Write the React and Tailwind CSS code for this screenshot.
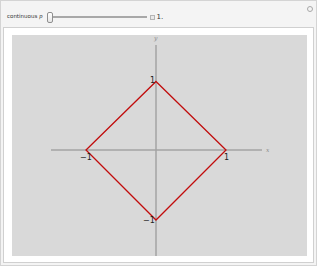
import React from 'react';

const Plot = () => (
  <svg width="295" height="221" viewBox="0 0 295 221" className="block">
    <line x1="39" y1="115" x2="250" y2="115" stroke="#a3a3a3" strokeWidth="1.5" />
    <line x1="144" y1="10" x2="144" y2="221" stroke="#a3a3a3" strokeWidth="1.5" />
    <polygon points="144,46.5 214,115 144,185 74,115" fill="none" stroke="#c10c0c" strokeWidth="1.3" />
    <text x="254" y="117" fontSize="6" fontStyle="italic" fill="#8a8a8a" fontFamily="DejaVu Serif, serif">x</text>
    <text x="142" y="5" fontSize="6" fontStyle="italic" fill="#8a8a8a" fontFamily="DejaVu Serif, serif">y</text>
    <text x="138" y="48" fontSize="8" fill="#222" fontFamily="DejaVu Sans, sans-serif">1</text>
    <text x="68" y="125" fontSize="8" fill="#222" fontFamily="DejaVu Sans, sans-serif">−1</text>
    <text x="212" y="125" fontSize="8" fill="#222" fontFamily="DejaVu Sans, sans-serif">1</text>
    <text x="131" y="188" fontSize="8" fill="#222" fontFamily="DejaVu Sans, sans-serif">−1</text>
  </svg>
);

export default function App() {
  return (
    <div className="w-[317px] h-[268px] bg-white font-['DejaVu_Sans',sans-serif]">
      <div className="w-[317px] h-[266px] border border-[#d4d4d4] bg-[#f4f4f4] flex flex-col">
        <div className="h-[26px] flex items-center pl-[6px] pr-[3px] pt-[6px] relative">
          <span className="text-[5.5px] text-[#333] leading-none">
            continuous <span className="italic font-['DejaVu_Serif',serif]">p</span>
          </span>
          <div className="ml-[4px] flex items-center">
            <div className="w-[6px] h-[11px] rounded-[2px] border border-[#8f8f8f] bg-gradient-to-b from-white to-[#e6e6e6]" />
            <div className="w-[94px] h-[2px] bg-[#a8a8a8]" />
            <div className="ml-[3px] w-[5px] h-[5px] border border-[#b5b5b5] bg-[#e9e9e9]" />
            <span className="ml-[2px] text-[7px] text-[#333] leading-none">1.</span>
          </div>
          <div className="absolute right-[3px] top-[5px] w-[6px] h-[6px] rounded-full border border-[#a8a8a8]" />
        </div>
        <div className="flex-1 mx-[2px] mb-[2px] bg-white border border-[#d0d0d0] pl-[8px] pt-[7px]">
          <div className="w-[295px] h-[221px] bg-[#d9d9d9]">
            <Plot />
          </div>
        </div>
      </div>
    </div>
  );
}
